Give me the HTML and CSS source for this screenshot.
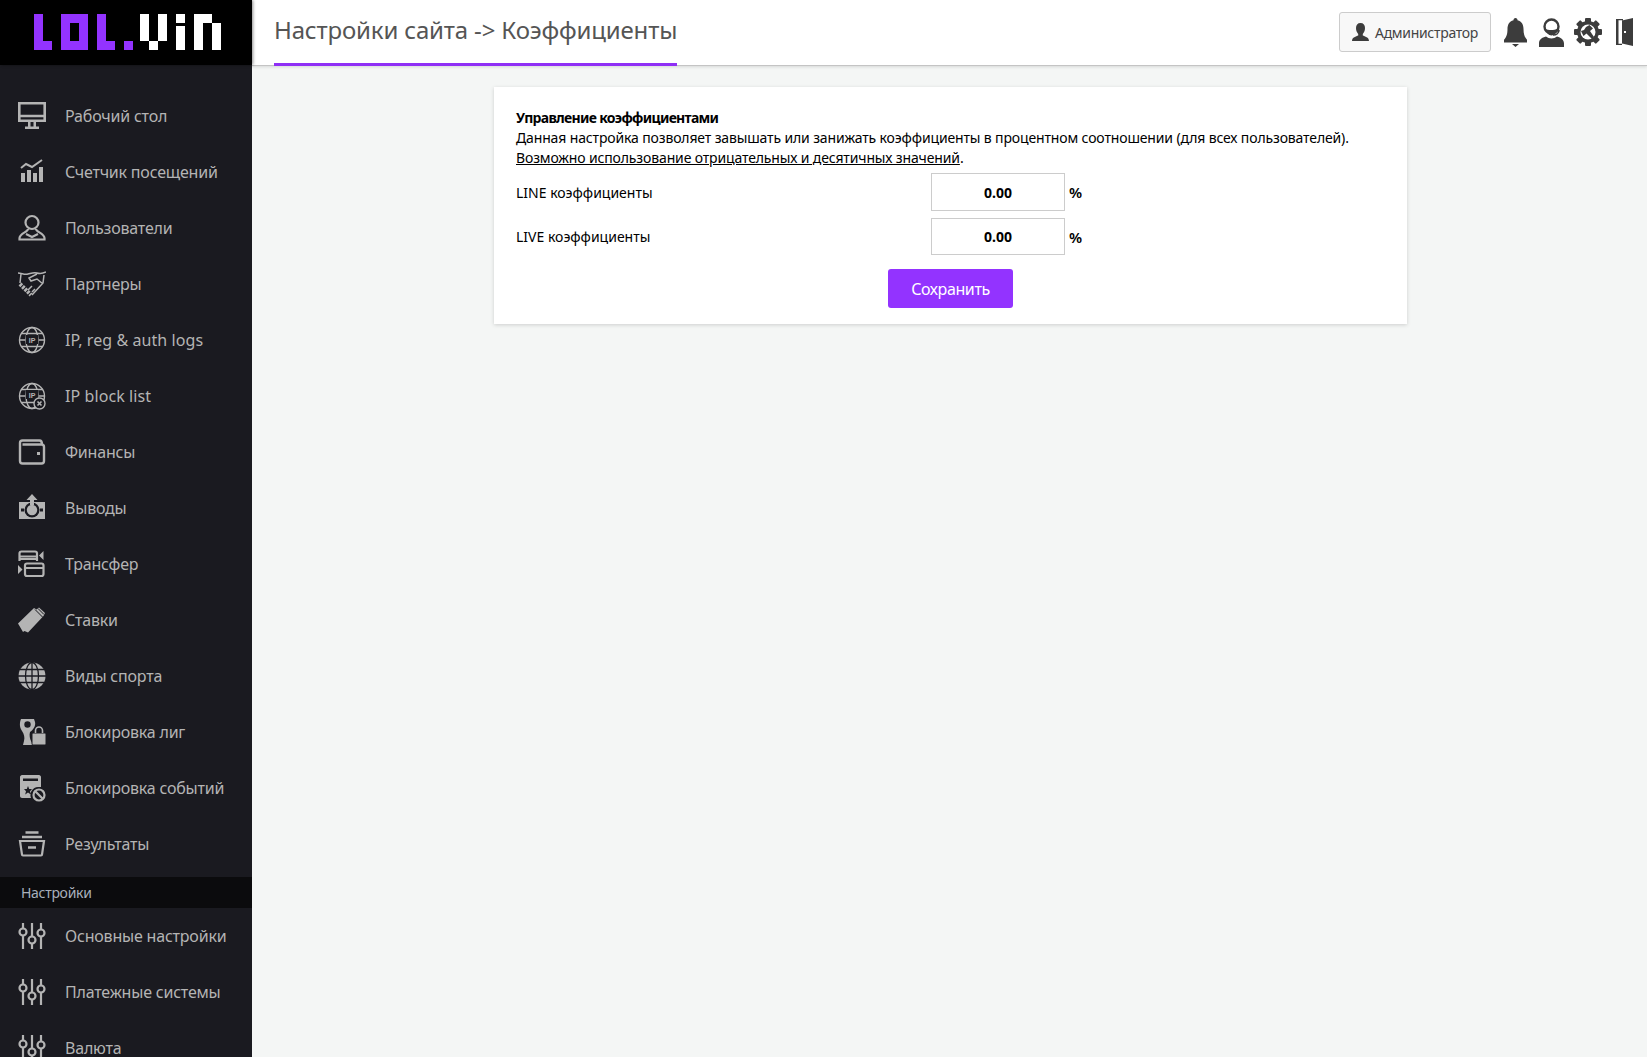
FILE: index.html
```html
<!DOCTYPE html>
<html lang="ru">
<head>
<meta charset="utf-8">
<title>Настройки сайта</title>
<link rel="stylesheet" href="styles.css">
</head>
<body>
<svg width="0" height="0" class="defs">
  <symbol id="sliders" viewBox="0 0 28 28"><g fill="none" stroke="currentColor" stroke-width="2.200"><path d="M5 1v5M5 14v13M14 1v13M14 22v5M23 1v6M23 15v12"/><circle cx="5" cy="10" r="3.500"/><circle cx="14" cy="18" r="3.500"/><circle cx="23" cy="11" r="3.500"/></g></symbol>
</svg>
<div class="app">
  <aside class="sidebar">
    <div class="logo">
      <svg width="190" height="37" viewBox="0 0 190 37">
        <g fill="#9333ff">
          <path d="M0 0h9v27h9v9H0z"/>
          <path fill-rule="evenodd" d="M27 0h27v36H27zM36 9v18h9V9z"/>
          <path d="M63 0h9v27h9v9H63z"/>
          <path d="M90 27h9v9h-9z"/>
        </g>
        <g fill="#fff">
          <path d="M106 0h9v27h-9zM124 0h9v27h-9zM115 27h9v9h-9z"/>
          <path d="M142 0h9v9h-9zM142 12h9v24h-9z"/>
          <path d="M160 0h18v9h9v27h-9V9h-9v27h-9z"/>
        </g>
      </svg>
    </div>
    <nav class="menu">
      <a class="item"><svg class="ic" viewBox="0 0 28 28"><path fill="none" stroke="currentColor" stroke-width="2.600" d="M1.300 1.300h25.400v17.400H1.300zM1.300 14h25.400"/><path fill="currentColor" d="M10 20h2.500v5H10zM15.500 20H18v5h-2.500zM7 24.500h14V27H7z"/></svg><span>Рабочий стол</span></a>
      <a class="item"><svg class="ic" viewBox="0 0 28 28"><path fill="currentColor" d="M3 15h4v9H3zM9 12h4v12H9zM15 15h4v9h-4zM21 9h4v15h-4z"/><path fill="none" stroke="currentColor" stroke-width="2" d="M3 10l5-4 6 3 10-7"/></svg><span>Счетчик посещений</span></a>
      <a class="item"><svg class="ic" viewBox="0 0 28 28"><g fill="none" stroke="currentColor" stroke-width="2.200"><circle cx="14" cy="8.500" r="6.500"/><path d="M10 15c0 3-8 4-8.500 9v1.500h25V24c-.5-5-8.500-6-8.500-9M8 20l6 3 6-3"/></g></svg><span>Пользователи</span></a>
      <a class="item"><svg class="ic" viewBox="0 0 28 28"><g fill="none" stroke="currentColor" stroke-width="1.500"><path d="M0 3c4 0 6 2 10 1s6-2 9-1 5 1 9-1M3 4l-1 9M26 5l-1 8-11 12M19 4l-8 4 2 3 6-2 6 5M10 20l4-4M14 22l3-3"/></g><path fill="none" stroke="currentColor" stroke-width="4" stroke-dasharray="2.500 1" d="M2 14l11 11"/></svg><span>Партнеры</span></a>
      <a class="item"><svg class="ic" viewBox="0 0 28 28"><g fill="none" stroke="currentColor" stroke-width="1.400"><circle cx="14" cy="14" r="12.500"/><ellipse cx="14" cy="14" rx="6" ry="12.500"/><path d="M3 7.500h22M3 20.500h22M1.500 14H7M21 14h5.500"/></g><rect x="8" y="9" width="12" height="9" fill="#1a1a20"/><text x="14" y="16.500" class="ip">IP</text></svg><span class="latin">IP, reg &amp; auth logs</span></a>
      <a class="item"><svg class="ic" viewBox="0 0 28 28"><g fill="none" stroke="currentColor" stroke-width="1.400"><circle cx="14" cy="14" r="12.500"/><ellipse cx="14" cy="14" rx="6" ry="12.500"/><path d="M3 7.500h22M3 20.500h22M1.500 14H7M21 14h5.500"/></g><rect x="8" y="8" width="12" height="9" fill="#1a1a20"/><text x="14" y="15.500" class="ip">IP</text><circle cx="21.500" cy="21.500" r="5.500" fill="#1a1a20" stroke="currentColor" stroke-width="1.400"/><path stroke="currentColor" stroke-width="1.600" d="M19.500 19.500l4 4M23.500 19.500l-4 4"/></svg><span class="latin">IP block list</span></a>
      <a class="item"><svg class="ic" viewBox="0 0 28 28"><path fill="none" stroke="currentColor" stroke-width="2.400" d="M2 7V5c0-1.500 1-2.500 2.500-2.500h17c1.500 0 2.500 1 2.500 4M2 7v16c0 1.500 1 2.500 2.500 2.500h19c1.500 0 2.500-1 2.500-2.500V9c0-1.500-1-2.500-2.500-2.500H4.500"/><rect x="19" y="14" width="3" height="3" fill="currentColor"/></svg><span>Финансы</span></a>
      <a class="item"><svg class="ic" viewBox="0 0 28 28"><rect x="1" y="8" width="26" height="17" fill="currentColor"/><rect x="3" y="14.500" width="3" height="3" fill="#1a1a20"/><rect x="22" y="14.500" width="3" height="3" fill="#1a1a20"/><circle cx="14" cy="16" r="7.500" fill="#1a1a20"/><circle cx="14" cy="16" r="5.200" fill="currentColor"/><path fill="currentColor" d="M14 0l5.500 6H16v5h-4V6H8.500z"/></svg><span>Выводы</span></a>
      <a class="item"><svg class="ic" viewBox="0 0 28 28"><g fill="none" stroke="currentColor" stroke-width="2.200"><path d="M1.500 11V3.500c0-1 1-2 2-2H17c1 0 2 1 2 2V11M1.500 6.500H19M1.500 9h17M9 13.500h14.500c1 0 2 1 2 2V24c0 1-1 2-2 2H9c-1 0-2-1-2-2v-8.500c0-1 1-2 2-2zM7 18h18.500"/></g><path fill="currentColor" d="M25.500 1v9L21 5.500zM0 15v9l4.500-4.500z"/></svg><span>Трансфер</span></a>
      <a class="item"><svg class="ic" viewBox="0 0 28 28"><path fill="currentColor" d="M0 17.500L16 2l2.500 1.500L21 1.500 27 7l-1.500 3L10 26.500 6.500 25 5 26z"/><path fill="none" stroke="#1a1a20" stroke-width="1" d="M17 3.500l8 8M20 2.500l6 6"/></svg><span>Ставки</span></a>
      <a class="item"><svg class="ic" viewBox="0 0 28 28"><circle cx="14" cy="14" r="13.500" fill="currentColor"/><g fill="none" stroke="#1a1a20" stroke-width="1.300"><ellipse cx="14" cy="14" rx="6.500" ry="13.500"/><path d="M14 0v28M0 14h28M2 7.500h24M2 20.500h24"/></g></svg><span>Виды спорта</span></a>
      <a class="item"><svg class="ic" viewBox="0 0 28 28"><path fill="currentColor" d="M3 1h13l1 3c1 4-2 8-5 10-1 3 0 7 1 9l2 4H5l1-4c1-4 0-7-2-10C2 10 1 6 3 1z"/><circle cx="9.500" cy="6.500" r="3.200" fill="#1a1a20"/><rect x="14" y="15" width="14" height="12" rx="1" fill="currentColor" stroke="#1a1a20"/><path fill="none" stroke="currentColor" stroke-width="1.600" d="M17.500 15v-2.500a3.500 3.500 0 017 0V15"/></svg><span>Блокировка лиг</span></a>
      <a class="item"><svg class="ic" viewBox="0 0 28 28"><path fill="currentColor" fill-rule="evenodd" d="M4 1h17c1 0 2 1 2 2v10h-3a8 8 0 00-7 11H4c-1 0-2-1-2-2V3c0-1 1-2 2-2zM5 4.500v2.500h15V4.500zM10 12l1.200 3H14l-2 2.200.8 3.300-2.800-2-2.800 2 .8-3.300-2-2.200h2.800z"/><circle cx="21" cy="21" r="5.500" fill="none" stroke="currentColor" stroke-width="2.200"/><path stroke="currentColor" stroke-width="2.200" d="M17.500 17.500l7 7"/></svg><span>Блокировка событий</span></a>
      <a class="item"><svg class="ic" viewBox="0 0 28 28"><g fill="none" stroke="currentColor" stroke-width="2.200"><path d="M2 11h24l-2 13.500c0 .5-.5 1-1 1H5c-.500 0-1-.500-1-1z"/><path stroke-width="2.400" d="M4 7h20M7.500 2.500h13M10 17.500h8"/></g></svg><span>Результаты</span></a>
      <div class="section">Настройки</div>
      <a class="item"><svg class="ic"><use href="#sliders"/></svg><span>Основные настройки</span></a>
      <a class="item"><svg class="ic"><use href="#sliders"/></svg><span>Платежные системы</span></a>
      <a class="item"><svg class="ic"><use href="#sliders"/></svg><span>Валюта</span></a>
    </nav>
  </aside>
  <div class="main">
    <header class="topbar">
      <h1 class="title">Настройки сайта -&gt; Коэффициенты</h1>
      <div class="tools">
        <button class="admin"><svg class="admin-ic" viewBox="0 0 17 18"><path fill="#3c3c3c" d="M8.500 0c3 0 4.500 2 4.500 5s-1 4.500-2.200 6v1.500c2 1 6.200 1.500 6.200 5.500H0c0-4 4.200-4.500 6.200-5.500V11C5 9.500 4 8 4 5s1.500-5 4.500-5z"/></svg>Администратор</button>
        <svg class="tool bell" viewBox="0 0 23 29"><path fill="#3c3c3c" d="M11.500 0c1.400 0 2 1 2 2.200 4.500 1 6 4.800 6 8.800 0 6 1.500 8.500 3.500 10.800V24.500H0v-2.700C2 19.500 3.500 17 3.500 11c0-4 1.500-7.800 6-8.800 0-1.200.6-2.200 2-2.200zM8 26h7l-3.500 3z"/></svg>
        <svg class="tool head" viewBox="0 0 25 29"><circle cx="12.500" cy="8.500" r="7" fill="none" stroke="#3c3c3c" stroke-width="2.400"/><path fill="#3c3c3c" d="M6.500 11c3 1.500 9 1.500 12-.5-.5 4-3 7-6 7s-5.500-3-6-6.500z"/><path fill="#3c3c3c" d="M7 18.500c1.500 1.200 3.500 2 5.500 2s4-.8 5.500-2c4 1 7 3.500 7 7V29H0v-3.500c0-4 3-6 7-7z"/><path fill="none" stroke="#3c3c3c" stroke-width="1.600" d="M20 12c0 3-2.500 5-6 5"/></svg>
        <svg class="tool gear" viewBox="0 0 28 28"><g transform="translate(14 14)"><g fill="#3c3c3c"><rect x="-3" y="-14" width="6" height="28" rx="1"/><rect x="-3" y="-14" width="6" height="28" rx="1" transform="rotate(45)"/><rect x="-3" y="-14" width="6" height="28" rx="1" transform="rotate(90)"/><rect x="-3" y="-14" width="6" height="28" rx="1" transform="rotate(135)"/></g><circle r="11" fill="#3c3c3c"/><circle r="7.500" fill="#fff"/><path fill="#3c3c3c" d="M1.500-7L5-3.500 2-1 6 5 4 7-1.500 1.500-4.500 4-7-1-4-2-2-5z"/></g></svg>
        <svg class="tool door" viewBox="0 0 17 28"><path fill="#3c3c3c" d="M6 2.500L17 0v28L6 25.500zM0 1h7v1.300H2.500v23.400H6V27H0z"/><rect x="8" y="13" width="2" height="2" fill="#fff"/></svg>
      </div>
    </header>
    <main class="content">
      <section class="card">
        <p class="lead"><b class="head-text">Управление коэффициентами</b><br>Данная настройка позволяет завышать или занижать коэффициенты в процентном соотношении (для всех пользователей).<br><u>Возможно использование отрицательных и десятичных значений</u>.</p>
        <div class="row"><label class="lbl">LINE коэффициенты</label><input class="field" value="0.00"><span class="pct">%</span></div>
        <div class="row row-live"><label class="lbl">LIVE коэффициенты</label><input class="field" value="0.00"><span class="pct">%</span></div>
        <div class="actions"><button class="save">Сохранить</button></div>
      </section>
    </main>
  </div>
</div>
</body>
</html>
```

FILE: styles.css
```css
* { box-sizing: border-box; }
html, body { margin: 0; height: 100%; overflow: hidden; }
body { font-family: "Noto Sans", "Liberation Sans", sans-serif; background: #f4f6f5; color: #000; }
.defs { position: absolute; }
.app { display: flex; height: 1057px; overflow: hidden; }
.sidebar { width: 252px; flex: none; background: #1a1a20; color: #b4b4b4; position: relative; z-index: 2; }
.logo { height: 65px; background: #000; padding: 14px 0 0 34px; box-shadow: 1px 0 3px rgba(0,0,0,.45); }
.logo svg { display: block; }
.menu { display: flex; flex-direction: column; padding-top: 23px; }
.item { height: 56px; display: flex; align-items: center; padding-left: 18px; font-size: 16px; letter-spacing: -0.2px; }
.latin { letter-spacing: 0.08px; }
.ic { width: 28px; height: 28px; flex: none; margin-right: 19px; }
.ip { font: bold 7px "Liberation Sans", sans-serif; text-anchor: middle; fill: currentColor; letter-spacing: 0; }
.section { height: 31px; margin-top: 5px; background: #0b0b0d; color: #a8b0bc; font-size: 14px; line-height: 31px; padding-left: 21px; letter-spacing: -0.3px; }
.main { flex: 1; min-width: 0; }
.topbar { height: 66px; background: #fff; border-bottom: 1px solid #c4c4c4; box-shadow: 0 1px 3px rgba(0,0,0,.12); display: flex; justify-content: space-between; padding: 0 14px 0 22px; }
.title { margin: 0; height: 66px; font-weight: 400; font-size: 24px; line-height: 60px; color: #555; border-bottom: 3px solid #8f2ff5; letter-spacing: -0.16px; white-space: nowrap; }
.tools { display: flex; align-items: center; padding-bottom: 1px; }
.admin { height: 40px; width: 152px; display: flex; align-items: center; gap: 6px; padding: 0 0 0 12px; background: #f8f8f8; border: 1px solid #ccc; border-radius: 3px; font: 14px "Noto Sans", sans-serif; letter-spacing: -0.3px; color: #444; margin-right: 13px; white-space: nowrap; }
.admin-ic { width: 17px; height: 18px; flex: none; }
.tool { flex: none; }
.bell { width: 23px; height: 29px; margin-right: 12px; }
.head { width: 25px; height: 29px; margin-right: 10px; }
.gear { width: 28px; height: 28px; margin-right: 14px; }
.door { width: 17px; height: 28px; }
.content { padding: 21px 0 0 242px; }
.card { width: 913px; height: 237px; background: #fff; box-shadow: 0 1px 4px rgba(0,0,0,.16); padding: 21px 22px; font-size: 14px; letter-spacing: -0.14px; }
.lead { margin: 0 0 5px; line-height: 20px; }
.head-text { letter-spacing: -0.7px; }
.row { display: flex; align-items: center; height: 38px; margin-bottom: 7px; }
.row-live { height: 37px; margin-bottom: 14px; }
.lbl { width: 415px; letter-spacing: 0; }
.field { width: 134px; height: 100%; border: 1px solid #ccc; background: #fff; text-align: center; font: bold 14px "Noto Sans", sans-serif; padding: 0; margin-right: 4px; outline: none; }
.pct { font-size: 15px; font-weight: 600; }
.actions { display: flex; justify-content: center; }
.save { width: 125px; height: 39px; border: 0; border-radius: 3px; background: #9333ff; color: #fff; font: 16px "Noto Sans", sans-serif; letter-spacing: -0.4px; }
```
